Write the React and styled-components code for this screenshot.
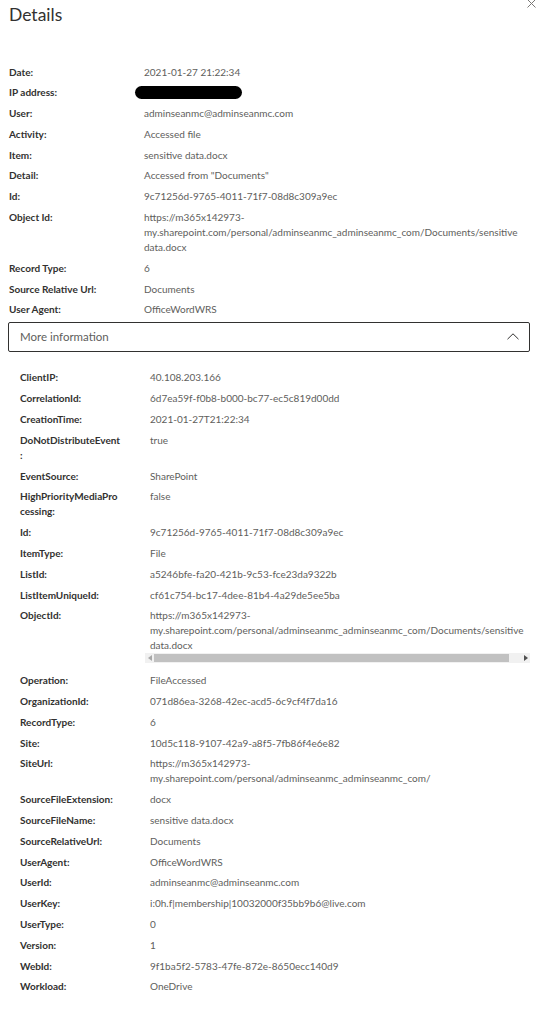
import React from 'react'
import styled, { createGlobalStyle } from 'styled-components'

const REDACTED = '__redacted__'

// labels are split where the panel lets them wrap
const summary = [
  [['Date:'], '2021-01-27 21:22:34'],
  [['IP address:'], REDACTED],
  [['User:'], 'adminseanmc@adminseanmc.com'],
  [['Activity:'], 'Accessed file'],
  [['Item:'], 'sensitive data.docx'],
  [['Detail:'], 'Accessed from "Documents"'],
  [['Id:'], '9c71256d-9765-4011-71f7-08d8c309a9ec'],
  [['Object Id:'], 'https://m365x142973-my.sharepoint.com/personal/adminseanmc_adminseanmc_com/Documents/sensitive data.docx'],
  [['Record Type:'], '6'],
  [['Source Relative Url:'], 'Documents'],
  [['User Agent:'], 'OfficeWordWRS'],
]

const moreInfo = [
  [['ClientIP:'], '40.108.203.166'],
  [['CorrelationId:'], '6d7ea59f-f0b8-b000-bc77-ec5c819d00dd'],
  [['CreationTime:'], '2021-01-27T21:22:34'],
  [['DoNotDistributeEvent', ':'], 'true'],
  [['EventSource:'], 'SharePoint'],
  [['HighPriorityMediaPro', 'cessing:'], 'false'],
  [['Id:'], '9c71256d-9765-4011-71f7-08d8c309a9ec'],
  [['ItemType:'], 'File'],
  [['ListId:'], 'a5246bfe-fa20-421b-9c53-fce23da9322b'],
  [['ListItemUniqueId:'], 'cf61c754-bc17-4dee-81b4-4a29de5ee5ba'],
  [['ObjectId:'], 'https://m365x142973-my.sharepoint.com/personal/adminseanmc_adminseanmc_com/Documents/sensitive data.docx', true],
  [['Operation:'], 'FileAccessed'],
  [['OrganizationId:'], '071d86ea-3268-42ec-acd5-6c9cf4f7da16'],
  [['RecordType:'], '6'],
  [['Site:'], '10d5c118-9107-42a9-a8f5-7fb86f4e6e82'],
  [['SiteUrl:'], 'https://m365x142973-my.sharepoint.com/personal/adminseanmc_adminseanmc_com/'],
  [['SourceFileExtension:'], 'docx'],
  [['SourceFileName:'], 'sensitive data.docx'],
  [['SourceRelativeUrl:'], 'Documents'],
  [['UserAgent:'], 'OfficeWordWRS'],
  [['UserId:'], 'adminseanmc@adminseanmc.com'],
  [['UserKey:'], 'i:0h.f|membership|10032000f35bb9b6@live.com'],
  [['UserType:'], '0'],
  [['Version:'], '1'],
  [['WebId:'], '9f1ba5f2-5783-47fe-872e-8650ecc140d9'],
  [['Workload:'], 'OneDrive'],
]

const LabelText = ({ parts }) =>
  parts.map((part, i) => (
    <React.Fragment key={i}>
      {i > 0 && <wbr />}
      {part}
    </React.Fragment>
  ))

const App = () => {
  return (
    <>
      <GlobalStyle />
      <Panel>
        <CloseButton aria-label="Close">
          <svg width="9" height="9" viewBox="0 0 9 9">
            <path d="M0.5 0.5 L8.5 8.5 M8.5 0.5 L0.5 8.5" stroke="#7a7876" strokeWidth="1" fill="none" />
          </svg>
        </CloseButton>
        <Title>Details</Title>

        <FieldList $top="37.5px">
          {summary.map(([label, value]) => (
            <Row key={label[0]} $col={135}>
              <Label $wrap={125}><LabelText parts={label} /></Label>
              {value === REDACTED ? <Redaction /> : <Value>{value}</Value>}
            </Row>
          ))}
        </FieldList>

        <Expander>
          <ExpanderText>More information</ExpanderText>
          <svg width="12" height="7" viewBox="0 0 12 7">
            <path d="M0.5 6.2 L6 0.8 L11.5 6.2" stroke="#323130" strokeWidth="1" fill="none" />
          </svg>
        </Expander>

        <Inner>
          <FieldList $top="18.5px">
            {moreInfo.map(([label, value, scroll]) => (
              <Row key={label[0]} $col={130}>
                <Label $wrap={100}><LabelText parts={label} /></Label>
                {scroll ? (
                  <ScrollCell>
                    <Value>{value}</Value>
                    <ScrollBar>
                      <Arrow $dim>
                        <svg width="4" height="6" viewBox="0 0 4 6"><path d="M4 0 L0 3 L4 6 Z" /></svg>
                      </Arrow>
                      <Thumb />
                      <Arrow>
                        <svg width="4" height="6" viewBox="0 0 4 6"><path d="M0 0 L4 3 L0 6 Z" /></svg>
                      </Arrow>
                    </ScrollBar>
                  </ScrollCell>
                ) : (
                  <Value>{value}</Value>
                )}
              </Row>
            ))}
          </FieldList>
        </Inner>
      </Panel>
    </>
  )
}

export default App

const GlobalStyle = createGlobalStyle`
  body {
    margin: 0;
    background: #ffffff;
    font-family: Lato, "Noto Sans", sans-serif;
  }
`

const Panel = styled.div`
  position: relative;
  padding: 3px 20px 40px 9px;
`

const CloseButton = styled.div`
  position: absolute;
  top: -1px;
  right: 14px;
  display: flex;
`

const Title = styled.h1`
  margin: 0;
  font-size: 17.5px;
  line-height: 24px;
  font-weight: 400;
  color: #323130;
`

const FieldList = styled.div`
  display: flex;
  flex-direction: column;
  gap: 5.8px;
  margin-top: ${p => p.$top};
`

const Row = styled.div`
  display: grid;
  grid-template-columns: ${p => p.$col}px 1fr;
  font-size: 10px;
  line-height: 15px;
`

const Label = styled.div`
  max-width: ${p => p.$wrap}px;
  font-weight: 700;
  color: #323130;
`

const Value = styled.div`
  color: #605e5c;
`

const Redaction = styled.div`
  width: 107px;
  height: 13px;
  margin: 1px 0 0 -9px;
  border-radius: 7px;
  background: #000;
`

const Expander = styled.div`
  display: flex;
  align-items: center;
  justify-content: space-between;
  height: 28px;
  margin: 4.5px 0 0 -1px;
  padding: 0 10px 0 11px;
  border: 1px solid #323130;
  border-radius: 2px;
`

const ExpanderText = styled.span`
  font-size: 11.5px;
  color: #605e5c;
`

const Inner = styled.div`
  padding-left: 11px;
`

const ScrollCell = styled.div`
  display: flex;
  flex-direction: column;
`

const ScrollBar = styled.div`
  display: flex;
  align-items: center;
  height: 10px;
  margin: 0 0 4px -5px;
  background: #f1f1f1;
`

const Arrow = styled.span`
  display: flex;
  justify-content: center;
  width: 9px;
  fill: ${p => (p.$dim ? '#a8a8a8' : '#505050')};
`

const Thumb = styled.div`
  flex: 1;
  height: 8px;
  margin-right: 12px;
  background: #c1c1c1;
`
